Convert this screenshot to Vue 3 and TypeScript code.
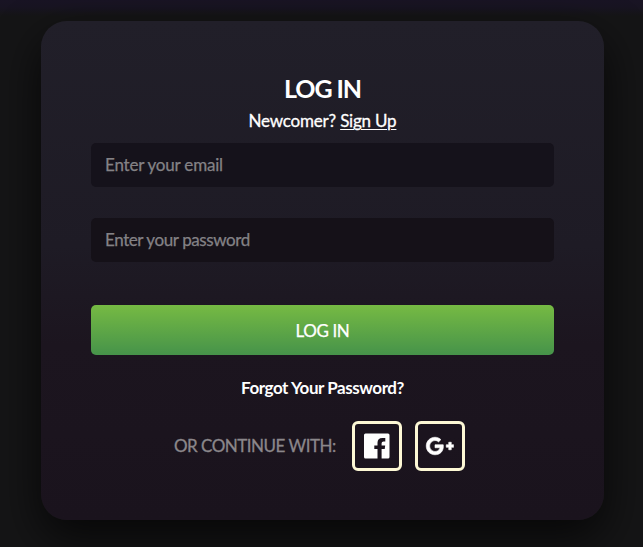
<script setup lang="ts">
import { ref } from 'vue'

const email = ref('')
const password = ref('')
</script>

<template>
  <main class="page">
    <section class="card">
      <h1 class="title">LOG IN</h1>
      <p class="newcomer"><span>Newcomer? </span><a class="signup">Sign Up</a></p>
      <form class="form" @submit.prevent>
        <input v-model="email" class="field" type="email" placeholder="Enter your email" />
        <input v-model="password" class="field password" type="password" placeholder="Enter your password" />
        <button class="submit" type="submit"><span>LOG IN</span></button>
      </form>
      <a class="forgot">Forgot Your Password?</a>
      <div class="social">
        <span class="social-label">OR CONTINUE WITH:</span>
        <button class="social-button" type="button">
          <svg viewBox="0 0 26 26" width="26" height="26">
            <path d="M1.5 .5H24Q25.5 .5 25.5 2V24Q25.5 25.5 24 25.5H17.6V16H20.7L21.2 12.4H17.6V10.3Q17.6 8.4 19.5 8.4H21.3V4.9H18.3Q13.5 4.9 13.5 9.8V12.4H10.3V16H13.5V25.5H1.5Q0 25.5 0 24V2Q0 .5 1.5 .5Z" />
          </svg>
        </button>
        <button class="social-button" type="button">
          <svg viewBox="0 0 24 24" width="30" height="30">
            <path d="M23,11H21V9H19V11H17V13H19V15H21V13H23M8,11V13.4H12C11.8,14.4 10.8,16.4 8,16.4C5.6,16.4 3.7,14.4 3.7,12C3.7,9.6 5.6,7.6 8,7.6C9.4,7.6 10.3,8.2 10.8,8.7L12.7,6.9C11.5,5.7 9.9,5 8,5C4.1,5 1,8.1 1,12C1,15.9 4.1,19 8,19C12,19 14.7,16.2 14.7,12.2C14.7,11.7 14.7,11.4 14.6,11H8Z" stroke-width="0.5" stroke="#fff" />
          </svg>
        </button>
      </div>
    </section>
  </main>
</template>

<style>
body {
  margin: 0;
  background: #151516;
}
</style>

<style scoped>
.page {
  box-sizing: border-box;
  height: 547px;
  padding: 21px 39px 27px 41px;
  overflow: hidden;
  background: linear-gradient(#191424 0, #181422 7px, #151516 16px);
  font-family: Lato, 'Liberation Sans', sans-serif;
  color: #fff;
}
.card {
  box-sizing: border-box;
  height: 499px;
  padding: 51px 50px 0;
  display: flex;
  flex-direction: column;
  align-items: center;
  border-radius: 26px;
  background: linear-gradient(#211f29, #1e1b25 45%, #1c151f 65%, #1a131d);
  box-shadow: 0 18px 46px rgba(0, 0, 0, 0.7);
}
.title {
  margin: 0;
  font-size: 25px;
  line-height: 32px;
  font-weight: 700;
  letter-spacing: -1.1px;
}
.newcomer {
  margin: 4px 0 0;
  font-size: 17px;
  line-height: 26px;
  white-space: pre;
  letter-spacing: -0.2px;
  -webkit-text-stroke: 0.3px #fff;
}
.signup {
  text-decoration: underline;
  text-decoration-thickness: 1px;
  text-underline-offset: 2px;
}
.form {
  width: 100%;
  margin-top: 9px;
  display: flex;
  flex-direction: column;
}
.field {
  box-sizing: border-box;
  height: 44px;
  padding: 0 14px 1px;
  border: 0;
  border-radius: 5px;
  outline: 0;
  background: #15121b;
  color: #fff;
  font: 17px Lato, 'Liberation Sans', sans-serif;
  letter-spacing: -0.2px;
}
.field::placeholder {
  color: #848286;
  opacity: 1;
  -webkit-text-stroke: 0.25px #848286;
}
.password {
  margin-top: 31px;
  background: #151118;
  letter-spacing: -0.4px;
}
.submit {
  height: 50px;
  margin-top: 43px;
  padding: 1px 0 0;
  border: 0;
  border-radius: 5px;
  background: linear-gradient(#76ba43, #46934a);
  color: #fff;
  font: 17px Lato, 'Liberation Sans', sans-serif;
  letter-spacing: -0.4px;
  -webkit-text-stroke: 0.25px #fff;
}
.forgot {
  margin-top: 20px;
  font-size: 17px;
  line-height: 26px;
  font-weight: 700;
  letter-spacing: -0.45px;
}
.social {
  display: flex;
  align-items: center;
  margin: 20px 6px 0 0;
}
.social-label {
  width: 162px;
  margin-right: 16px;
  padding-bottom: 1px;
  color: #8b878b;
  font-size: 17px;
  white-space: nowrap;
  letter-spacing: -0.5px;
  -webkit-text-stroke: 0.3px #8b878b;
}
.social-button {
  box-sizing: border-box;
  width: 50px;
  height: 50px;
  padding: 0;
  display: flex;
  align-items: center;
  justify-content: center;
  border: 3px solid #fdf8d5;
  border-radius: 6px;
  background: transparent;
}
.social-button + .social-button {
  margin-left: 13px;
}
.social-button svg {
  flex: none;
  fill: #fff;
}
</style>
